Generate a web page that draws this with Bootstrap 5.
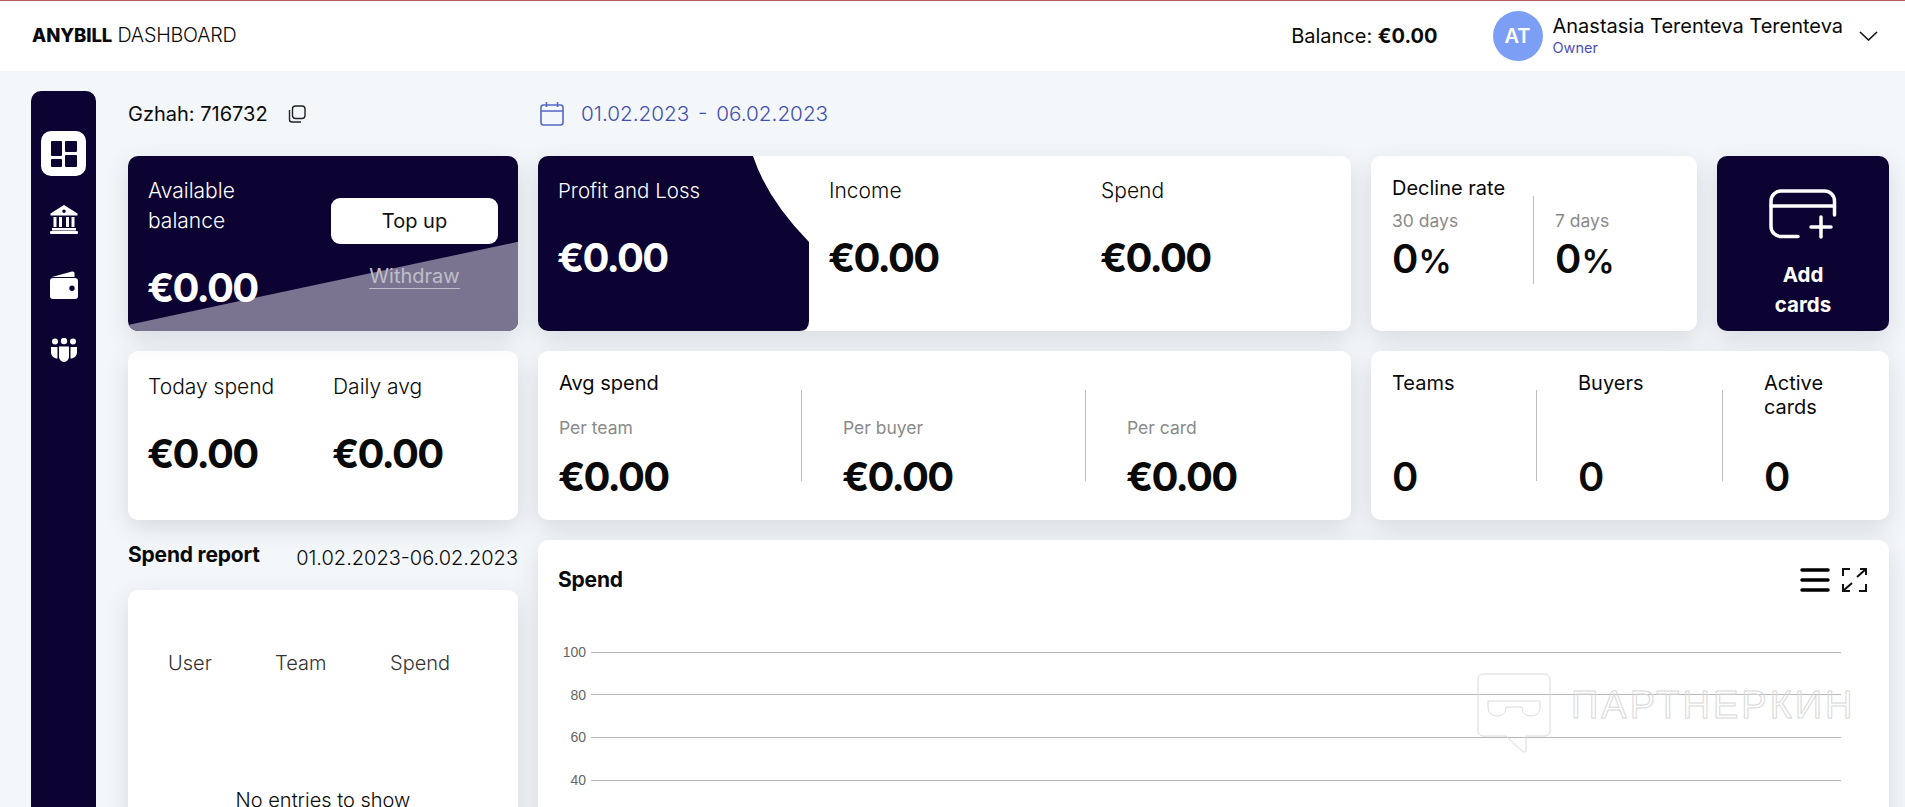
<!DOCTYPE html>
<html lang="en">
<head>
    <meta charset="UTF-8">
    <meta name="viewport" content="width=device-width, initial-scale=1.0">
    <title>Anybill Dashboard</title>
    <link href="https://cdn.jsdelivr.net/npm/bootstrap@5.3.0/dist/css/bootstrap.min.css" rel="stylesheet">
    <style>
        html, body { height: 100%; overflow: hidden; }
        body { background: #f4f7fa; font-family: "Inter", "Liberation Sans", sans-serif; color: #0a0a0a; }
        .top-bar { height: 71px; background: #fff; border-top: 1px solid #b85c5c; padding: 0 27px 0 32px; }
        .logo-text { font-size: 19.7px; font-weight: 300; letter-spacing: -.2px; }
        .logo-text b { font-size: 18.5px; font-weight: 800; letter-spacing: -.1px; }
        .top-balance { font-size: 20px; margin-right: 55px; }
        .top-balance b { font-weight: 700; }
        .avatar { width: 50px; height: 50px; border-radius: 50%; background: #7c9ef5; color: #fff; font-weight: 600; font-size: 20px; margin-right: 10px; }
        .user-name { font-size: 20px; line-height: 23px; }
        .user-role { font-size: 14.5px; line-height: 19px; color: #4b50b8; }
        .page-wrap { padding: 20px 16px 0 31px; gap: 32px; height: 736px; }
        .side-nav { width: 65px; background: #0c0333; border-radius: 10px 10px 0 0; padding-top: 40px; flex: none; }
        .side-item { width: 45px; height: 45px; margin-bottom: 20.500px; color: #fff; }
        .side-item.is-active { background: #fff; border-radius: 10px; color: #0c0333; }
        .main-col { width: 1761px; flex: none; }
        .id-row { height: 45px; margin-bottom: 20px; }
        .id-left { width: 412px; font-size: 20px; gap: 20px; }
        .date-range { color: #3f4fb0; font-size: 20.700px; font-weight: 300; gap: 17px; word-spacing: 3px; padding-top: 1px; }
        .tile { background: #fff; border-radius: 10px; box-shadow: 0 8px 24px rgba(60, 70, 80, .16); overflow: hidden; }
        .tile-row { gap: 20px; margin-bottom: 20px; }
        .w-left { width: 390px; flex: none; }
        .w-mid { width: 813px; flex: none; }
        .w-dec { width: 326px; flex: none; }
        .w-add { width: 172px; flex: none; }
        .w-right { width: 518px; flex: none; }
        .h-one { height: 175px; }
        .h-two { height: 169px; }
        .navy-tile { background: #0c0333; color: #fff; }
        .poppy { font-size: 21px; font-weight: 300; line-height: 30px; }
        .money { font-size: 40px; font-weight: 700; line-height: 48px; letter-spacing: -1.800px; margin-left: -1px; }
        .num { font-size: 40px; font-weight: 600; line-height: 48px; }
        .num small { font-size: 33px; font-weight: 600; }
        .inter-lbl { font-size: 20px; line-height: 24px; }
        .gray-lbl { font-size: 17.500px; line-height: 24px; color: #8a8a8a; }
        .vline { width: 1px; background: #bdbdbd; flex: none; }

        .bal-tile { position: relative; padding: 20px; }
        .bal-wedge { position: absolute; inset: 0; background: #7a7490; clip-path: polygon(0 96.5%, 100% 49%, 100% 100%, 0 100%); }
        .bal-body { position: relative; height: 100%; }
        .topup-btn { width: 167px; height: 46px; margin-top: 22px; background: #fff; border: 0; border-radius: 9px; font-size: 20px; color: #111; padding: 0; }
        .withdraw-link { font-size: 20px; line-height: 24px; color: #c0bdcb; border-bottom: 1px solid #c0bdcb; margin-top: 20px; text-decoration: none; }
        .bal-money { margin-top: 28px; }

        .pl-panel { width: 271px; flex: none; background: #0c0333; color: #fff; padding: 20px; clip-path: path("M0 0 H215 Q229 43 271 86 V165 Q271 175 261 175 H0 Z"); }
        .pl-panel .poppy { font-size: 20.500px; }
        .pl-cell { width: 272px; padding: 20px; flex: none; }
        .pl-money { margin-top: 28px; }

        .dec-wrap { padding: 20px 21px; }
        .dec-left { width: 141px; }
        .dec-divider { height: 88px; margin-top: -4px; margin-right: 21px; }
        .dec-gray { margin-top: 9px; }
        .dec-num { margin-top: 2px; }

        .add-tile { font-size: 20.500px; font-weight: 700; line-height: 30px; padding-top: 33px; }
        .add-icon { display: block; margin: 0 auto 21px; }

        .two-cell { width: 185px; flex: none; }
        .two-pad { padding: 21px 20px 20px; }
        .two-money { margin-top: 28px; }

        .avg-pad { padding: 20px 21px 0; }
        .avg-title { margin-bottom: 21px; }
        .avg-cell { width: 242px; flex: none; }
        .avg-divider { height: 91px; margin-top: -26px; margin-right: 41px; }
        .avg-money { margin-top: 13px; }

        .team-pad { padding: 20px 21px 0; }
        .team-cell { width: 144px; flex: none; }
        .team-divider { height: 91px; margin: 19px 41px 0 0; }
        .team-lbl { height: 82px; }

        .report-head { height: 30px; margin: 0 0 20px; }
        .report-title { font-size: 21px; font-weight: 700; line-height: 30px; letter-spacing: -.2px; }
        .report-date { font-size: 20px; font-weight: 300; line-height: 30px; padding-top: 3px; }
        .report-tile { height: 300px; padding-top: 58px; }
        .report-cols { padding-left: 40px; font-size: 20px; font-weight: 300; color: #333; line-height: 30px; }
        .report-cols span:nth-child(1) { width: 107px; }
        .report-cols span:nth-child(2) { width: 115px; }
        .report-empty { margin-top: 107px; font-size: 20px; font-weight: 300; line-height: 30px; text-align: center; }
        .lower-row { gap: 20px; }

        .chart-tile { position: relative; height: 420px; padding: 24px 22px 0 20px; }
        .chart-head { height: 32px; margin-bottom: 35px; }
        .chart-title { font-size: 21px; font-weight: 700; letter-spacing: -.2px; }
        .chart-icons { gap: 12px; }
        .grid-line-row { height: 42.600px; gap: 5px; font-family: "Liberation Sans", Arial, sans-serif; font-size: 14px; color: #666; }
        .grid-label { width: 28px; text-align: right; line-height: 1; }
        .grid-rule { width: 1250px; height: 1px; background: #b8b8b8; }

        .wm-box { position: absolute; left: 939px; top: 133px; width: 380px; height: 82px; pointer-events: none; gap: 20px; }
        .wm-text { font-family: "Liberation Sans", Arial, sans-serif; font-size: 38px; line-height: 1; margin-top: 13px; color: transparent; -webkit-text-stroke: 1px #d8d8d8; letter-spacing: 3px; white-space: nowrap; }
    </style>
</head>
<body>

<header class="top-bar d-flex align-items-center">
    <div class="logo-text"><b>ANYBILL</b> DASHBOARD</div>
    <div class="ms-auto d-flex align-items-center">
        <div class="top-balance">Balance: <b>€0.00</b></div>
        <div class="avatar d-flex align-items-center justify-content-center">AT</div>
        <div>
            <div class="user-name">Anastasia Terenteva Terenteva</div>
            <div class="user-role">Owner</div>
        </div>
        <svg class="ms-3" width="19" height="10" viewBox="0 0 19 10" fill="none" stroke="#111" stroke-width="1.6"><path d="M1 1l8.5 8L18 1"/></svg>
    </div>
</header>

<div class="page-wrap d-flex">
    <nav class="side-nav d-flex flex-column align-items-center">
        <div class="side-item is-active d-flex align-items-center justify-content-center">
            <svg width="26" height="26" viewBox="0 0 26 26" fill="currentColor"><rect width="11" height="15" rx="1"/><rect x="14" width="12" height="11" rx="1"/><rect y="18" width="11" height="8" rx="1"/><rect x="14" y="14" width="12" height="12" rx="1"/></svg>
        </div>
        <div class="side-item d-flex align-items-center justify-content-center">
            <svg width="28" height="29" viewBox="0 0 28 29" fill="currentColor"><path fill-rule="evenodd" d="M14 0L27.5 8.5V10.5H.5V8.500ZM14 4.500a1.800 1.800 0 1 0 0 3.600 1.800 1.800 0 0 0 0-3.600Z"/><rect x="3.500" y="12" width="3" height="10"/><rect x="9" y="12" width="3" height="10"/><rect x="16" y="12" width="3" height="10"/><rect x="21.500" y="12" width="3" height="10"/><rect x="2" y="23" width="24" height="2.500"/><rect x="0" y="26" width="28" height="3" rx="1"/></svg>
        </div>
        <div class="side-item d-flex align-items-center justify-content-center">
            <svg width="28" height="28" viewBox="0 0 28 28" fill="currentColor"><path d="M2 6L22 .5c1.500-.3 2.500.5 2.500 2V6Z"/><path fill-rule="evenodd" d="M3 7h22a3 3 0 0 1 3 3v15a3 3 0 0 1-3 3H3a3 3 0 0 1-3-3V10a3 3 0 0 1 3-3ZM22 14.500a2.700 2.700 0 1 0 0 5.400 2.700 2.700 0 0 0 0-5.400Z"/></svg>
        </div>
        <div class="side-item d-flex align-items-center justify-content-center">
            <svg width="26" height="24" viewBox="0 0 26 24" fill="currentColor"><circle cx="4" cy="3.500" r="3"/><circle cx="13" cy="3" r="3.200"/><circle cx="22" cy="3.500" r="3"/><path d="M0 9h6.500v11.500C3 20.500 0 18 0 14Z"/><path d="M8 8.500h10v10c0 3-2.500 5.500-5 5.500s-5-2.500-5-5.500Z"/><path d="M19.500 9H26v5c0 4-3 6.500-6.500 6.500Z"/></svg>
        </div>
    </nav>

    <main class="main-col">
        <div class="id-row d-flex align-items-center">
            <div class="id-left d-flex align-items-center">
                <span>Gzhah: 716732</span>
                <svg width="18" height="18" viewBox="0 0 18 18" fill="none" stroke="#222" stroke-width="1.400"><rect x="4.500" y="1" width="12.500" height="12.500" rx="3"/><path d="M1.500 5v9.500a2.500 2.500 0 0 0 2.500 2.500h9"/></svg>
            </div>
            <div class="date-range d-flex align-items-center">
                <svg width="24" height="24" viewBox="0 0 24 24" fill="none" stroke="#5468c4" stroke-width="1.600"><rect x="1" y="3" width="22" height="20" rx="2.500"/><path d="M1 9h22M6.500 0v5M17.500 0v5"/></svg>
                <span>01.02.2023 - 06.02.2023</span>
            </div>
        </div>

        <div class="tile-row d-flex">
            <div class="tile navy-tile bal-tile w-left h-one">
                <div class="bal-wedge"></div>
                <div class="bal-body d-flex justify-content-between">
                    <div>
                        <div class="poppy">Available<br>balance</div>
                        <div class="money bal-money">€0.00</div>
                    </div>
                    <div class="d-flex flex-column align-items-center">
                        <button type="button" class="topup-btn">Top up</button>
                        <a href="#" class="withdraw-link">Withdraw</a>
                    </div>
                </div>
            </div>

            <div class="tile w-mid h-one d-flex">
                <div class="pl-panel">
                    <div class="poppy">Profit and Loss</div>
                    <div class="money pl-money">€0.00</div>
                </div>
                <div class="pl-cell">
                    <div class="poppy">Income</div>
                    <div class="money pl-money">€0.00</div>
                </div>
                <div class="pl-cell">
                    <div class="poppy">Spend</div>
                    <div class="money pl-money">€0.00</div>
                </div>
            </div>

            <div class="tile w-dec h-one dec-wrap">
                <div class="inter-lbl">Decline rate</div>
                <div class="d-flex">
                    <div class="dec-left">
                        <div class="gray-lbl dec-gray">30 days</div>
                        <div class="num dec-num">0<small>%</small></div>
                    </div>
                    <div class="vline dec-divider"></div>
                    <div>
                        <div class="gray-lbl dec-gray">7 days</div>
                        <div class="num dec-num">0<small>%</small></div>
                    </div>
                </div>
            </div>

            <div class="tile navy-tile w-add h-one add-tile text-center">
                <svg class="add-icon" width="68" height="50" viewBox="0 0 68 50" fill="none" stroke="#fff" stroke-width="3.500" stroke-linecap="round"><path d="M29 47.500H12A10 10 0 0 1 2 37.500V12A10 10 0 0 1 12 2h43a10 10 0 0 1 10.500 10v14"/><path d="M2 17h63.500"/><path d="M42 38h20M52 28v20"/></svg>
                Add<br>cards
            </div>
        </div>

        <div class="tile-row d-flex">
            <div class="tile w-left h-two two-pad d-flex">
                <div class="two-cell">
                    <div class="poppy">Today spend</div>
                    <div class="money two-money">€0.00</div>
                </div>
                <div>
                    <div class="poppy">Daily avg</div>
                    <div class="money two-money">€0.00</div>
                </div>
            </div>

            <div class="tile w-mid h-two avg-pad">
                <div class="inter-lbl avg-title">Avg spend</div>
                <div class="d-flex">
                    <div class="avg-cell">
                        <div class="gray-lbl">Per team</div>
                        <div class="money avg-money">€0.00</div>
                    </div>
                    <div class="vline avg-divider"></div>
                    <div class="avg-cell">
                        <div class="gray-lbl">Per buyer</div>
                        <div class="money avg-money">€0.00</div>
                    </div>
                    <div class="vline avg-divider"></div>
                    <div class="avg-cell">
                        <div class="gray-lbl">Per card</div>
                        <div class="money avg-money">€0.00</div>
                    </div>
                </div>
            </div>

            <div class="tile w-right h-two team-pad d-flex">
                <div class="team-cell">
                    <div class="inter-lbl team-lbl">Teams</div>
                    <div class="num">0</div>
                </div>
                <div class="vline team-divider"></div>
                <div class="team-cell">
                    <div class="inter-lbl team-lbl">Buyers</div>
                    <div class="num">0</div>
                </div>
                <div class="vline team-divider"></div>
                <div class="team-cell">
                    <div class="inter-lbl team-lbl">Active<br>cards</div>
                    <div class="num">0</div>
                </div>
            </div>
        </div>

        <div class="lower-row d-flex">
            <div class="w-left">
                <div class="report-head d-flex justify-content-between">
                    <span class="report-title">Spend report</span>
                    <span class="report-date">01.02.2023-06.02.2023</span>
                </div>
                <div class="tile report-tile">
                    <div class="report-cols d-flex">
                        <span>User</span><span>Team</span><span>Spend</span>
                    </div>
                    <div class="report-empty">No entries to show</div>
                </div>
            </div>

            <div class="tile chart-tile flex-grow-1">
                <div class="chart-head d-flex align-items-center justify-content-between">
                    <span class="chart-title">Spend</span>
                    <div class="chart-icons d-flex align-items-center">
                        <svg width="30" height="24" viewBox="0 0 30 24" fill="none" stroke="#000" stroke-width="3.500" stroke-linecap="round"><path d="M2 2h26M2 12h26M2 22h26"/></svg>
                        <svg width="25" height="24" viewBox="0 0 25 24" fill="none" stroke="#111" stroke-width="2"><path d="M1 8V1h7M1 16v7h7M24 16v7h-7"/><path d="M15 9l9-8M18 1h6v6M10 15l-9 8M1 17v6h6"/></svg>
                    </div>
                </div>
                <div class="d-flex align-items-center grid-line-row"><span class="grid-label">100</span><span class="grid-rule"></span></div>
                <div class="d-flex align-items-center grid-line-row"><span class="grid-label">80</span><span class="grid-rule"></span></div>
                <div class="d-flex align-items-center grid-line-row"><span class="grid-label">60</span><span class="grid-rule"></span></div>
                <div class="d-flex align-items-center grid-line-row"><span class="grid-label">40</span><span class="grid-rule"></span></div>

                <div class="wm-box d-flex align-items-start">
                    <svg width="74" height="80" viewBox="0 0 74 80" fill="none" stroke="#d8d8d8" stroke-width="1"><path d="M6 1h62a5 5 0 0 1 5 5v52a5 5 0 0 1-5 5H49v14c0 2-2 3-4 1L29 63H6a5 5 0 0 1-5-5V6a5 5 0 0 1 5-5Z"/><path d="M11 28h52M11 28v6c0 6 4 9 9 9s9-3 9-9M45 34c0 6 4 9 9 9s9-3 9-9v-6M29 34h16"/></svg>
                    <span class="wm-text">ПАРТНЕРКИН</span>
                </div>
            </div>
        </div>
    </main>
</div>

</body>
</html>
